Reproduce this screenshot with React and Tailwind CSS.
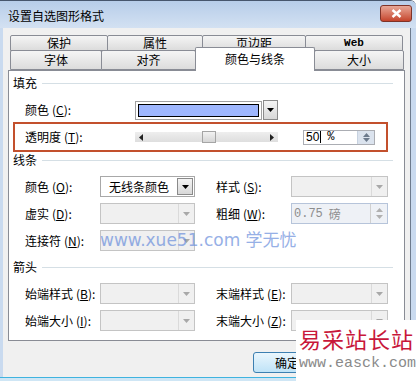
import React from 'react';

const Down = ({ c = '#000' }) => (
  <svg width="7" height="4" viewBox="0 0 7 4">
    <path d="M0 0h7L3.5 4z" fill={c} />
  </svg>
);

const Up = ({ c = '#000' }) => (
  <svg width="7" height="4" viewBox="0 0 7 4">
    <path d="M0 4h7L3.5 0z" fill={c} />
  </svg>
);

function Lbl({ t, k, className = '' }) {
  return (
    <span className={`text-[12px] leading-[16px] text-black whitespace-nowrap ${className}`}>
      {t}
      <span className="ml-[3px]">(</span>
      <span className="underline">{k}</span>):
    </span>
  );
}

function Combo({ w, text, disabled }) {
  if (disabled) {
    return (
      <div className={`flex h-[21px] border border-[#c4c4c4] bg-[#f0f0f0] ${w}`}>
        <div className="flex-1" />
        <div className="w-[16px] border-l border-[#dadada] flex items-center justify-center">
          <Down c="#a8a8a8" />
        </div>
      </div>
    );
  }
  return (
    <div className={`flex h-[21px] border border-[#a8a8a8] bg-white ${w}`}>
      <div className="flex-1 flex items-center pl-[8px] text-[12px] text-black whitespace-nowrap overflow-hidden">{text}</div>
      <div className="w-[16px] my-[1px] mr-[1px] border border-[#8a8a8a] bg-gradient-to-b from-[#f4f4f4] to-[#d8d8d8] flex items-center justify-center">
        <Down />
      </div>
    </div>
  );
}

function Header({ t }) {
  return (
    <div className="flex items-center h-[16px] pl-[4px]">
      <span className="text-[12px] leading-[16px] text-black">{t}</span>
      <div className="flex-1 h-px bg-[#d5dfe5] ml-[5px] mr-[11px]" />
    </div>
  );
}

function Tab({ w, children, mono }) {
  return (
    <div
      className={`${w} h-full border border-[#898c95] -ml-px first:ml-0 rounded-t-[2px] bg-gradient-to-b from-[#f5f5f5] to-[#dcdcdc] flex items-center justify-center text-black ${
        mono ? "font-['Liberation_Mono',monospace] text-[11px] font-bold" : 'text-[12px]'
      }`}
    >
      {children}
    </div>
  );
}

export default function App() {
  return (
    <div className="w-[416px] h-[381px] bg-white overflow-hidden relative font-['Noto_Sans_CJK_SC',sans-serif]">
      <div className="w-[416px] h-[381px] flex flex-col border-t border-[#47566d] rounded-tr-[6px] overflow-hidden">
        {/* title bar */}
        <div className="h-[27px] flex items-center justify-between bg-gradient-to-b from-[#b7cde9] to-[#d3e1f2] pl-[8px] pr-[4px]">
          <span className="text-[12px] text-black pt-[2px]">设置自选图形格式</span>
          <div className="w-[32px] h-[17px] rounded-[3px] border border-[#7f3328] bg-gradient-to-b from-[#e7a797] to-[#c4432b] flex items-center justify-center mb-[3px]">
            <svg width="11" height="9" viewBox="0 0 11 9">
              <path d="M1.5 1L9.5 8M9.5 1L1.5 8" stroke="#fff" strokeWidth="2.4" />
            </svg>
          </div>
        </div>

        <div className="flex-1 flex">
          <div className="w-[3px] bg-[#c9daef]" />
          {/* client area */}
          <div className="flex-1 bg-[#f0f0f0] flex flex-col">
            {/* tabs */}
            <div className="pt-[7px] pl-[7px]">
              <div className="flex h-[16px]">
                <Tab w="w-[98px]">保护</Tab>
                <Tab w="w-[96px]">属性</Tab>
                <Tab w="w-[104px]">页边距</Tab>
                <Tab w="w-[98px]" mono>Web</Tab>
              </div>
              <div className="flex h-[20px] items-end -mt-px">
                <div className="h-[20px] flex">
                  <Tab w="w-[92px]">字体</Tab>
                  <Tab w="w-[95px]">对齐</Tab>
                </div>
                <div className="w-[120px] h-[24px] -ml-px -mb-px relative z-10 border border-b-0 border-[#898c95] bg-white rounded-t-[2px] flex items-center justify-center text-[12px] text-black pb-[1px]">
                  颜色与线条
                </div>
                <div className="h-[20px] flex -ml-px">
                  <Tab w="w-[90px]">大小</Tab>
                </div>
              </div>
            </div>

            {/* panel */}
            <div className="ml-[5px] w-[397px] border border-[#898c95] bg-white pt-[4px] pb-[9px]">
              <Header t="填充" />
              <div className="flex items-center h-[20px] mt-[9px] pl-[16px]">
                <Lbl t="颜色" k="C" className="w-[110px]" />
                <div className="w-[127px] h-[19px] border border-[#a0a0a0] p-[2px] bg-white">
                  <div className="w-full h-full bg-[#9eb6fd] border border-black" />
                </div>
                <div className="w-[15px] h-[20px] ml-[1px] border border-[#8a8a8a] bg-gradient-to-b from-[#f4f4f4] to-[#d8d8d8] flex items-center justify-center">
                  <Down />
                </div>
              </div>

              <div className="ml-[4px] mt-[2px] w-[375px] h-[30px] border-2 border-[#c3502d] flex items-center pl-[10px]">
                <Lbl t="透明度" k="T" className="w-[110px]" />
                <div className="relative w-[143px] h-[10px] bg-gradient-to-b from-[#eeeeee] to-[#dedede] flex items-center justify-between px-[4px]">
                  <svg width="4" height="7" viewBox="0 0 4 7">
                    <path d="M4 0v7L0 3.5z" fill="#222" />
                  </svg>
                  <svg width="4" height="7" viewBox="0 0 4 7">
                    <path d="M0 0v7L4 3.5z" fill="#222" />
                  </svg>
                  <div className="absolute left-[67px] top-[-1px] w-[14px] h-[12px] border border-[#a5a5a5] bg-gradient-to-b from-[#f2f2f2] to-[#d6d6d6]" />
                </div>
                <div className="ml-[25px] w-[72px] h-[15px] border border-[#abadb3] bg-white flex items-center">
                  <span className="text-[12px] leading-[13px] pl-[2px] font-['Liberation_Sans',sans-serif]">50</span>
                  <span className="w-px h-[12px] bg-black ml-px" />
                  <span className="text-[12px] leading-[13px] ml-[6px] font-['Liberation_Mono',monospace]">%</span>
                  <div className="ml-auto w-[17px] h-full bg-[#dbe3ee] border-l border-[#c7d2e0] flex flex-col items-center justify-center gap-[1px]">
                    <Up c="#6c7a8c" />
                    <Down c="#6c7a8c" />
                  </div>
                </div>
              </div>

              <Header t="线条" />
              <div className="flex items-center h-[21px] mt-[8px] pl-[16px]">
                <Lbl t="颜色" k="O" className="w-[75px]" />
                <Combo w="w-[95px]" text="无线条颜色" />
                <Lbl t="样式" k="S" className="ml-[21px] w-[75px]" />
                <Combo w="w-[97px]" disabled />
              </div>
              <div className="flex items-center h-[21px] mt-[6px] pl-[16px]">
                <Lbl t="虚实" k="D" className="w-[75px]" />
                <Combo w="w-[95px]" disabled />
                <Lbl t="粗细" k="W" className="ml-[21px] w-[75px]" />
                <div className="w-[97px] h-[21px] border border-[#b6c4da] bg-[#eef1f6] flex items-center">
                  <span className="pl-[2px] text-[12px] text-[#8d8d8d] font-['Liberation_Mono',monospace]">0.75</span>
                  <span className="ml-[6px] text-[12px] text-[#8d8d8d]">磅</span>
                  <div className="ml-auto w-[17px] h-full border-l border-[#d0d0d0] flex flex-col items-center justify-center gap-[3px]">
                    <Up c="#b0b0b0" />
                    <Down c="#b0b0b0" />
                  </div>
                </div>
              </div>
              <div className="flex items-center h-[21px] mt-[6px] pl-[16px]">
                <Lbl t="连接符" k="N" className="w-[75px]" />
                <Combo w="w-[95px]" disabled />
              </div>

              <div className="mt-[8px]">
                <Header t="箭头" />
              </div>
              <div className="flex items-center h-[21px] mt-[8px] pl-[16px]">
                <Lbl t="始端样式" k="B" className="w-[75px]" />
                <Combo w="w-[95px]" disabled />
                <Lbl t="末端样式" k="E" className="ml-[21px] w-[75px]" />
                <Combo w="w-[97px]" disabled />
              </div>
              <div className="flex items-center h-[21px] mt-[6px] pl-[16px]">
                <Lbl t="始端大小" k="I" className="w-[75px]" />
                <Combo w="w-[95px]" disabled />
                <Lbl t="末端大小" k="Z" className="ml-[21px] w-[75px]" />
                <Combo w="w-[97px]" disabled />
              </div>
            </div>

            {/* buttons: the watermark box lies over the right part */}
            <div className="flex pl-[250px] pt-[11px]">
              <div className="w-[75px] h-[21px] rounded-[3px] border border-[#3c7fb1] bg-gradient-to-b from-[#eaf6fd] to-[#bfe3f7] flex items-center pl-[21px] text-[12px] text-black">
                确定
              </div>
            </div>
          </div>
          <div className="w-[6px] border-l border-[#6d7b8d] bg-[#c9daef]" />
        </div>
        <div className="h-[4px] border-t border-[#3fb3df] bg-[#cfe6f5]" />
      </div>

      {/* watermark: xue51 */}
      <div className="absolute left-[100px] top-[226px] text-[17px] text-[#6b8fdc] opacity-70 font-['DejaVu_Sans','Noto_Sans_CJK_SC',sans-serif] whitespace-nowrap">
        www.xue51.com <span className="font-['Noto_Sans_CJK_SC',sans-serif]">学无忧</span>
      </div>

      {/* watermark: easck */}
      <div className="absolute left-[296px] top-[320px] w-[120px] h-[61px] bg-white flex flex-col pl-[3px] pt-[4px]">
        <span className="text-[22px] leading-[28px] tracking-[1px] text-[#c8173a] whitespace-nowrap">易采站长站</span>
        <span className="text-[15px] leading-[20px] mt-[2px] text-[#8a8a8a] font-['Liberation_Mono',monospace] whitespace-nowrap">www.easck.com</span>
      </div>
    </div>
  );
}
